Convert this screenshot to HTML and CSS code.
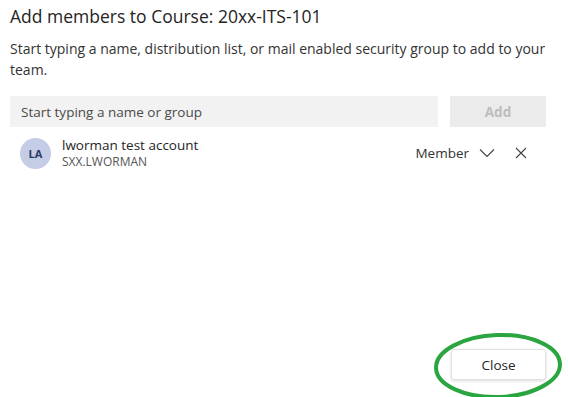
FILE: index.html
```html
<!DOCTYPE html>
<html lang="en">
<head>
  <meta charset="UTF-8">
  <meta name="viewport" content="width=device-width, initial-scale=1.0">
  <title>Add members</title>
  <link rel="stylesheet" href="styles.css">
</head>
<body>
  <div class="dialog">
    <h2 class="dialog-title">Add members to Course: 20xx-ITS-101</h2>
    <p class="dialog-text">Start typing a name, distribution list, or mail enabled security group to add to your team.</p>

    <!-- Search row -->
    <div class="search-row">
      <input type="text" class="search-input" placeholder="Start typing a name or group">
      <button type="button" class="add-button" disabled>Add</button>
    </div>

    <!-- Member list -->
    <div class="member">
      <div class="avatar">LA</div>
      <div class="member-info">
        <div class="member-name">lworman test account</div>
        <div class="member-id">SXX.LWORMAN</div>
      </div>
      <div class="member-role">
        <span>Member</span>
        <svg class="chevron" width="16" height="10" viewBox="0 0 16 10"><path d="M1 1.5 L8 8.5 L15 1.5" fill="none" stroke="#424242" stroke-width="1.1"/></svg>
      </div>
      <svg class="remove" width="12" height="12" viewBox="0 0 12 12"><path d="M1 1 L11 11 M11 1 L1 11" fill="none" stroke="#424242" stroke-width="1.1"/></svg>
    </div>

    <div class="footer">
      <button type="button" class="close-button">Close</button>
      <svg class="circled" width="132" height="70" viewBox="0 0 132 70"><ellipse cx="65" cy="35" rx="62" ry="31" fill="none" stroke="#2ba540" stroke-width="4" transform="rotate(-2 65 35)"/></svg>
    </div>
  </div>
</body>
</html>
```

FILE: styles.css
```css
body {
  margin: 0;
  background: #ffffff;
  font-family: 'Open Sans', 'Noto Sans', sans-serif;
  color: #252424;
}

.dialog {
  width: 568px;
  height: 397px;
  padding: 0 22px 0 10px;
  box-sizing: border-box;
  display: flex;
  flex-direction: column;
}

.dialog-title {
  margin: 3px 0 0;
  font-size: 17.5px;
  font-weight: 400;
  line-height: 26px;
}

.dialog-text {
  margin: 9px 0 0;
  font-size: 14px;
  line-height: 21px;
  color: #333;
  max-width: 550px;
}

/* Search row */
.search-row {
  display: flex;
  gap: 12px;
  margin-top: 16px;
}

.search-input {
  flex: 1;
  height: 31px;
  border: none;
  background: #f2f2f2;
  padding: 0 11px;
  font-family: inherit;
  font-size: 13.5px;
  color: #252424;
  outline: none;
}

.search-input::placeholder {
  color: #4a4a4a;
}

.add-button {
  width: 96px;
  height: 31px;
  border: none;
  background: #ebebeb;
  color: #bdbdbd;
  font-family: inherit;
  font-size: 13.5px;
  font-weight: 700;
}

/* Member */
.member {
  display: flex;
  align-items: center;
  margin-top: 9px;
  padding-left: 10px;
}

.avatar {
  width: 31px;
  height: 31px;
  border-radius: 50%;
  background: #c5cce6;
  color: #2b3a67;
  font-size: 11px;
  font-weight: 700;
  display: flex;
  align-items: center;
  justify-content: center;
}

.member-info {
  margin-left: 11px;
  flex: 1;
}

.member-name {
  font-size: 13.5px;
  line-height: 18px;
}

.member-id {
  font-size: 12px;
  line-height: 16px;
  color: #555;
}

.member-role {
  display: flex;
  align-items: center;
  gap: 10px;
  font-size: 13.5px;
  color: #333;
}

.remove {
  margin: 0 19px 0 20px;
}

/* Footer */
.footer {
  margin-top: auto;
  margin-bottom: 17px;
  align-self: flex-end;
  position: relative;
}

.close-button {
  width: 95px;
  height: 31px;
  background: #ffffff;
  border: 1px solid #e1e1e1;
  border-radius: 3px;
  box-shadow: 0 1px 3px rgba(0, 0, 0, 0.15);
  font-family: inherit;
  font-size: 13.5px;
  color: #252424;
}

.circled {
  position: absolute;
  left: -18px;
  top: -18px;
}
```
